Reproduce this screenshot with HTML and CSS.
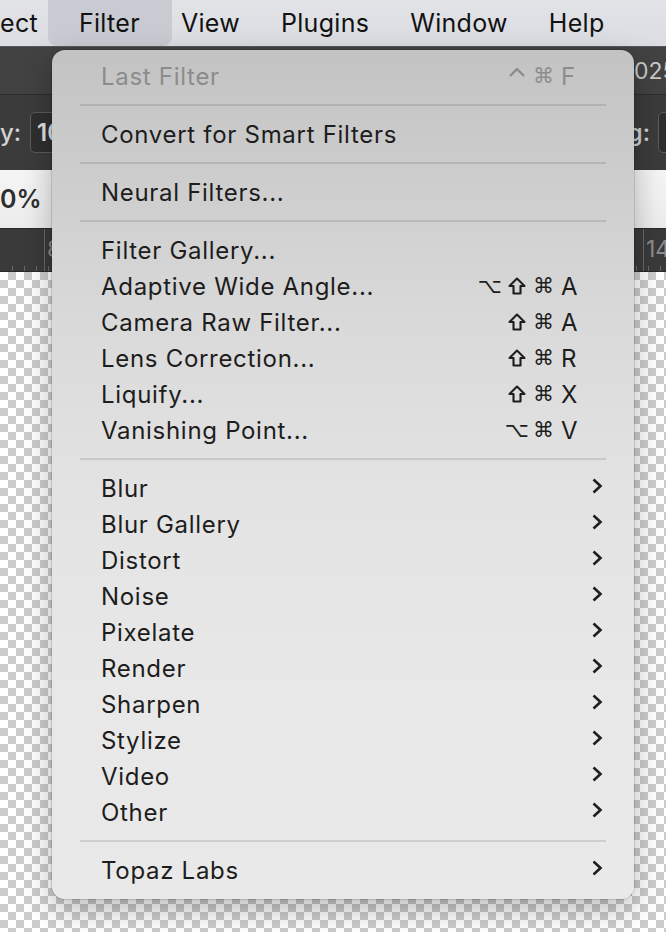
FILE: index.html
```html
<!DOCTYPE html>
<html lang="en">
<head>
<meta charset="utf-8">
<title>Filter menu</title>
<link rel="stylesheet" href="styles.css">
</head>
<body>
<div class="screen">
  <header class="menubar">
    <span class="mb-item">ect</span>
    <span class="mb-item active">Filter</span>
    <span class="mb-item">View</span>
    <span class="mb-item">Plugins</span>
    <span class="mb-item">Window</span>
    <span class="mb-item">Help</span>
  </header>

  <div class="app">
    <div class="titlebar"><span class="doc-title">025</span></div>
    <div class="options">
      <div class="opt-group">
        <span class="opt-label">y:</span>
        <span class="opt-input">100%</span>
      </div>
      <div class="opt-group right">
        <span class="opt-label">g:</span>
        <span class="opt-input"></span>
      </div>
    </div>
    <div class="tabs"><span class="zoom">0%</span></div>
    <div class="ruler">
      <span class="ruler-mark">8</span>
      <span class="ruler-mark right">14</span>
    </div>
    <div class="canvas"></div>
  </div>

  <nav class="menu">
    <div class="item disabled"><span class="label">Last Filter</span><span class="keys"><span class="mod"><svg class="sym" viewBox="0 0 20 20"><path d="M3 11 L10 4 L17 11"/></svg></span><span class="mod">⌘</span><span class="key">F</span></span></div>
    <div class="sep"></div>
    <div class="item"><span class="label">Convert for Smart Filters</span></div>
    <div class="sep"></div>
    <div class="item"><span class="label">Neural Filters...</span></div>
    <div class="sep"></div>
    <div class="item"><span class="label">Filter Gallery...</span></div>
    <div class="item"><span class="label">Adaptive Wide Angle...</span><span class="keys"><span class="mod">⌥</span><span class="mod"><svg class="sym" viewBox="0 0 20 20"><path d="M10 2.5 L17.5 10 H13.5 V17.5 H6.5 V10 H2.5 Z"/></svg></span><span class="mod">⌘</span><span class="key">A</span></span></div>
    <div class="item"><span class="label">Camera Raw Filter...</span><span class="keys"><span class="mod"><svg class="sym" viewBox="0 0 20 20"><path d="M10 2.5 L17.5 10 H13.5 V17.5 H6.5 V10 H2.5 Z"/></svg></span><span class="mod">⌘</span><span class="key">A</span></span></div>
    <div class="item"><span class="label">Lens Correction...</span><span class="keys"><span class="mod"><svg class="sym" viewBox="0 0 20 20"><path d="M10 2.5 L17.5 10 H13.5 V17.5 H6.5 V10 H2.5 Z"/></svg></span><span class="mod">⌘</span><span class="key">R</span></span></div>
    <div class="item"><span class="label">Liquify...</span><span class="keys"><span class="mod"><svg class="sym" viewBox="0 0 20 20"><path d="M10 2.5 L17.5 10 H13.5 V17.5 H6.5 V10 H2.5 Z"/></svg></span><span class="mod">⌘</span><span class="key">X</span></span></div>
    <div class="item"><span class="label">Vanishing Point...</span><span class="keys"><span class="mod">⌥</span><span class="mod">⌘</span><span class="key">V</span></span></div>
    <div class="sep"></div>
    <div class="item"><span class="label">Blur</span><svg class="chev" viewBox="0 0 12 18"><path d="M2.5 2.5 L9.5 9 L2.5 15.5"/></svg></div>
    <div class="item"><span class="label">Blur Gallery</span><svg class="chev" viewBox="0 0 12 18"><path d="M2.5 2.5 L9.5 9 L2.5 15.5"/></svg></div>
    <div class="item"><span class="label">Distort</span><svg class="chev" viewBox="0 0 12 18"><path d="M2.5 2.5 L9.5 9 L2.5 15.5"/></svg></div>
    <div class="item"><span class="label">Noise</span><svg class="chev" viewBox="0 0 12 18"><path d="M2.5 2.5 L9.5 9 L2.5 15.5"/></svg></div>
    <div class="item"><span class="label">Pixelate</span><svg class="chev" viewBox="0 0 12 18"><path d="M2.5 2.5 L9.5 9 L2.5 15.5"/></svg></div>
    <div class="item"><span class="label">Render</span><svg class="chev" viewBox="0 0 12 18"><path d="M2.5 2.5 L9.5 9 L2.5 15.5"/></svg></div>
    <div class="item"><span class="label">Sharpen</span><svg class="chev" viewBox="0 0 12 18"><path d="M2.5 2.5 L9.5 9 L2.5 15.5"/></svg></div>
    <div class="item"><span class="label">Stylize</span><svg class="chev" viewBox="0 0 12 18"><path d="M2.5 2.5 L9.5 9 L2.5 15.5"/></svg></div>
    <div class="item"><span class="label">Video</span><svg class="chev" viewBox="0 0 12 18"><path d="M2.5 2.5 L9.5 9 L2.5 15.5"/></svg></div>
    <div class="item"><span class="label">Other</span><svg class="chev" viewBox="0 0 12 18"><path d="M2.5 2.5 L9.5 9 L2.5 15.5"/></svg></div>
    <div class="sep"></div>
    <div class="item"><span class="label">Topaz Labs</span><svg class="chev" viewBox="0 0 12 18"><path d="M2.5 2.5 L9.5 9 L2.5 15.5"/></svg></div>
  </nav>
</div>
</body>
</html>
```

FILE: styles.css
```css
* { box-sizing: border-box; }

html, body {
  margin: 0;
  padding: 0;
}

body {
  width: 666px;
  height: 932px;
  overflow: hidden;
  font-family: Inter, "Noto Sans", "Liberation Sans", sans-serif;
}

.screen {
  position: relative;
  width: 666px;
  height: 932px;
  overflow: hidden;
  display: flex;
  flex-direction: column;
}

/* ---------- macOS menu bar ---------- */
.menubar {
  height: 47px;
  flex: none;
  display: flex;
  align-items: center;
  gap: 41px;
  padding-left: 0;
  background: linear-gradient(#e2e3e7, #dcdde2);
  border-bottom: 1px solid #55575b;
  font-size: 25px;
  letter-spacing: 0.3px;
  color: #121212;
  white-space: nowrap;
}

.mb-item {
  line-height: 47px;
}

.mb-item.active {
  padding: 0 32px 0 31px;
  margin: 0 -32px 0 -31px;
  background: #c8cbd1;
  border-radius: 0 0 9px 9px;
  height: 46px;
  line-height: 46px;
}

/* ---------- app chrome behind the menu ---------- */
.app {
  flex: 1;
  display: flex;
  flex-direction: column;
  min-height: 0;
}

.titlebar {
  height: 48px;
  flex: none;
  background: #424242;
  border-bottom: 1px solid #2c2c2c;
  display: flex;
  justify-content: flex-end;
  align-items: center;
  overflow: hidden;
}

.doc-title {
  color: #c9c9c9;
  font-size: 23px;
  margin-right: -10px;
  width: 42px;
  white-space: nowrap;
}

.options {
  height: 75px;
  flex: none;
  background: #3b3b3b;
  display: flex;
  justify-content: space-between;
  align-items: center;
  overflow: hidden;
  color: #d2d2d2;
  font-size: 24px;
}

.opt-group {
  display: flex;
  align-items: center;
  gap: 9px;
}

.opt-group.right {
  margin-right: -72px;
  gap: 8px;
}

.opt-label {
  font-weight: 500;
}

.opt-input {
  display: inline-block;
  width: 80px;
  height: 41px;
  line-height: 39px;
  padding-left: 6px;
  border: 1px solid #5c5c5c;
  border-radius: 5px;
  background: #2f2f2f;
  color: #e0e0e0;
  font-weight: 600;
}

.tabs {
  height: 59px;
  flex: none;
  background: linear-gradient(#f5f5f5, #ececec);
  display: flex;
  align-items: center;
  font-size: 25px;
  font-weight: 600;
  color: #2e2e2e;
  white-space: nowrap;
  overflow: hidden;
  border-bottom: 1px solid #2a2a2a;
}

.ruler {
  height: 43px;
  flex: none;
  background:
    repeating-linear-gradient(90deg, #6a6a6a 0 1px, transparent 1px 12px) 12px 100% / 100% 5px no-repeat,
    #3a3a3a;
  border-bottom: 1px solid #2a2a2a;
  color: #8d8d8d;
  font-size: 23px;
  display: flex;
  align-items: flex-start;
  justify-content: space-between;
  overflow: hidden;
}

.ruler-mark {
  border-left: 1px solid #6a6a6a;
  height: 100%;
  padding-left: 2px;
  padding-top: 6px;
  margin-left: 44px;
}

.ruler-mark.right {
  margin-left: 0;
  margin-right: -4px;
  width: 27px;
}

.canvas {
  flex: 1;
  background-color: #ffffff;
  background-image:
    conic-gradient(#cccccc 0 25%, #ffffff 0 50%, #cccccc 0 75%, #ffffff 0);
  background-size: 16px 16px;
  background-position: 0 0;
}

/* ---------- Filter dropdown menu ---------- */
.menu {
  position: absolute;
  left: 52px;
  top: 50px;
  width: 582px;
  height: 849px;
  padding: 8px 0 9px;
  border-radius: 13px;
  background: linear-gradient(180deg, #c3c3c3 0%, #cdcdcd 15%, #dadada 33%, #e3e3e3 52%, #e8e8e8 75%, #e9e9e9 100%);
  box-shadow: 0 0 0 1px rgba(0, 0, 0, 0.12), 0 10px 30px rgba(0, 0, 0, 0.28);
  font-size: 24px;
  color: #1d1d1d;
}

.item {
  height: 36px;
  display: flex;
  align-items: center;
  justify-content: space-between;
  padding: 0 31px 0 49px;
  white-space: nowrap;
}

.item.disabled {
  color: #8c8c8c;
}

.label {
  letter-spacing: 0.7px;
}

.keys {
  display: flex;
  align-items: center;
  margin-right: 20px;
}

.mod {
  width: 27px;
  height: 36px;
  display: flex;
  align-items: center;
  justify-content: center;
  font-family: "DejaVu Sans", sans-serif;
  font-size: 21px;
}

.sym {
  width: 20px;
  height: 20px;
  fill: none;
  stroke: currentColor;
  stroke-width: 2.1;
  stroke-linejoin: round;
}

.disabled .sym {
  stroke-width: 2.4;
  margin-top: -2px;
}

.key {
  width: 22px;
  margin-left: 4px;
  text-align: left;
}

.chev {
  width: 12px;
  height: 18px;
  margin-top: -5px;
  fill: none;
  stroke: #1f1f1f;
  stroke-width: 2.6;
}

.sep {
  height: 22px;
  display: flex;
  align-items: center;
  margin: 0 28px;
}

.sep::before {
  content: "";
  display: block;
  width: 100%;
  height: 2px;
  background: rgba(0, 0, 0, 0.11);
}
```
